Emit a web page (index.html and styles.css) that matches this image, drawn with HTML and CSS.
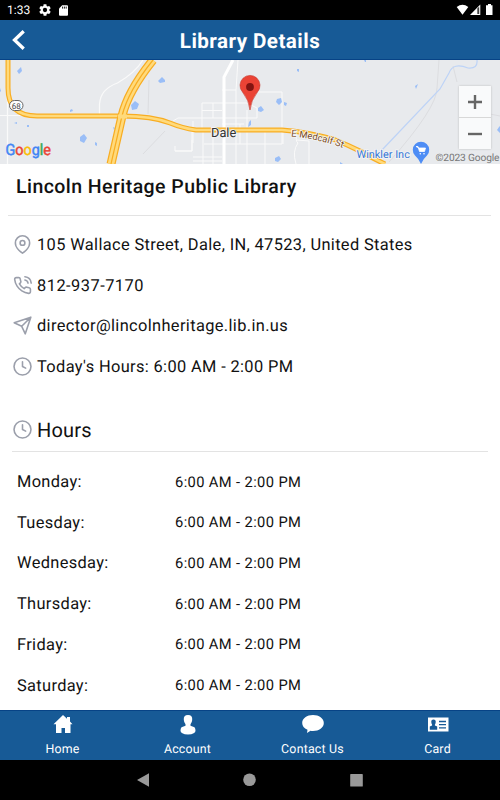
FILE: index.html
```html
<!DOCTYPE html>
<html lang="en">
<head>
    <meta charset="UTF-8">
    <meta name="viewport" content="width=device-width, initial-scale=1.0">
    <title>Library Details</title>
    <link rel="stylesheet" href="styles.css">
</head>
<body>
    <div class="status">
        <span class="time">1:33</span>
        <svg class="gear" width="12" height="12" viewBox="2 2 20 20"><path fill="#fff" d="M19.14 12.94c.04-.3.06-.61.06-.94s-.02-.64-.07-.94l2.03-1.58c.18-.14.23-.41.12-.61l-1.92-3.32c-.12-.22-.37-.29-.59-.22l-2.39.96c-.5-.38-1.03-.7-1.62-.94l-.36-2.54c-.04-.24-.24-.41-.48-.41h-3.84c-.24 0-.43.17-.47.41l-.36 2.54c-.59.24-1.13.57-1.62.94l-2.39-.96c-.22-.08-.47 0-.59.22L2.74 8.87c-.12.21-.08.47.12.61l2.03 1.58c-.05.3-.09.63-.09.94s.02.64.07.94l-2.03 1.58c-.18.14-.23.41-.12.61l1.92 3.32c.12.22.37.29.59.22l2.39-.96c.5.38 1.03.7 1.62.94l.36 2.54c.05.24.24.41.48.41h3.84c.24 0 .44-.17.47-.41l.36-2.54c.59-.24 1.13-.56 1.62-.94l2.39.96c.22.08.47 0 .59-.22l1.92-3.32c.12-.22.07-.47-.12-.61l-2.01-1.58zM12 15.6A3.6 3.6 0 1 1 12 8.4a3.6 3.6 0 0 1 0 7.2z"/></svg>
        <svg class="sd" width="9" height="11" viewBox="0 0 9 11"><path fill="#fff" d="M3.2.3H8q1 0 1 1v8.4q0 1-1 1H1q-1 0-1-1V3.5z"/><path stroke="#000" stroke-width=".9" d="M3.6 1.6v2M5.4 1.6v2M7.2 1.6v2"/></svg>
        <svg class="signals" width="38" height="12" viewBox="0 0 38 12"><path fill="#fff" d="M.7 3Q6.5-1.4 12.300 3L6.500 10.800zM24.300.5V11H14z"/><path fill="#444" d="M21.300 4.500l1.900-1.900V10h-1.900z"/><path fill="#fff" d="M32 0h3v1.300h1.500V11h-6.500V1.300H32z"/></svg>
    </div>
    <header>
        <svg class="back" width="14" height="20" viewBox="0 0 14 20"><path d="M11.700 1.200L2.500 10l9.200 8.800" fill="none" stroke="#fff" stroke-width="3.300"/></svg>
        <h1>Library Details</h1>
    </header>
    <div class="map">
        <svg width="500" height="104" viewBox="0 0 500 104">
            <!-- small streets -->
            <g class="street">
                <path d="M0 55.500H36M7.500 30V104M99.500 56V44q1-15 18-21Q135 13 143 0" stroke-width="1.200"/>
                <path d="M238 0l-2 30v74M222 30h14M222 43h25l10 5V58H178l-5 3M202 70V43h20M202 50.500h20M213 43v15M203 104V68M193 83V61M247 50v54M247 36v-4h35v52M204 84h78M192 80V91h-17v-5M192 70v21h-17M213 70v34M193 97h29M193 101h29M240 64v20M222 64h22M265 72v32M283 68V84M297 74q-2 7 1 9q-6 8-2 21M297 80l12 1v23"/>
            </g>
            <path d="M233 0l-9 17v87" fill="none" stroke="#fff" stroke-width="3"/>
            <g fill="none" stroke="#dcdde0" stroke-width="1">
                <path d="M149 20l-1 34M143 94l22-23M439 0l-2 28q0 20-48 74M457 22l-4-16M485 53l15 3"/>
            </g>
            <path d="M477 0q1 9-9 8-15-6-19 5l-9 16-58 61" fill="none" stroke="#bdd3f7" stroke-width="1.200"/>
            <!-- lakes -->
            <g fill="#9abef7">
                <path d="M17 11l4-4 1 4-3 3zM0 28l1 3-1 1zM158 21l4-4 3 3v2l-5 1zM131 45l4-4 4 3-2 5-5 1zM80 77l4-3 3 4-3 5-4-2zM95 82l2 1v3l-2-1zM70 50l2-1 1 2-3 1zM14 63l3-1v2zM27 65h2v2h-2z"/>
                <path d="M258 48l3-2 3 4-3 2-3-1zM249 62l2-2v5l-3 2zM277 39l4-1 1 4-3 3-3-3zM284 42l3 1-1 3-2-1zM297 9h2v3l-2-1zM275 98l4-2 2 3-3 3-3-1zM415 26l3-2-2 5zM499 67l1-1v7l-3-3zM364 0h2v2h-1zM340 102l3 2h-3zM113 67l2 1-1 2z"/>
            </g>
            <!-- highways -->
            <g fill="none">
                <path class="edge" d="M8 0V28Q8 56 37 56H122Q152 56 170 63Q182 68 196 70H282Q307 72 333 79Q348 85 362 92Q372 98 385 104"/>
                <path class="fill" d="M8 0V28Q8 56 37 56H122Q152 56 170 63Q182 68 196 70H282Q307 72 333 79Q348 85 362 92Q372 98 385 104"/>
                <path d="M153 0Q128 31 122 56L111 104" stroke="#f8ad22" stroke-width="9"/>
                <path d="M153 0Q128 31 122 56L111 104" stroke="#ffda7b" stroke-width="6.500"/>
                <path d="M153 0Q128 31 122 56L111 104" stroke="#f8ad22" stroke-width="1.200"/>
                <path d="M118 56.500h9" stroke="#ffda7b" stroke-width="4"/>
            </g>
            <rect x="9.500" y="40.500" width="13.500" height="10" rx="5" fill="#fff" stroke="#666" stroke-width="1"/>
            <text x="16.300" y="48.500" text-anchor="middle" font-size="8" fill="#444">68</text>
            <path d="M250 50Q249 40 242.500 32A10 10 0 1 1 257.500 32Q251 40 250 50z" fill="#ea4335" stroke="#c5362b" stroke-width=".6"/>
            <circle cx="250" cy="27" r="3.900" fill="#811411"/>
            <text class="halo" x="211" y="77" font-size="12.800" fill="#333">Dale</text>
            <path id="medcalf" d="M291 76.500Q323 79.500 348 90" fill="none"/>
            <text class="halo road" font-size="9.400"><textPath href="#medcalf">E Medcalf St</textPath></text>
            <text class="halo" x="356.500" y="98" font-size="10.900" fill="#3777d5">Winkler Inc</text>
            <path d="M421 104Q419 99 415 95.500A8.200 8.200 0 1 1 427 95.500Q423 99 421 104z" fill="#4e8df5"/>
            <path d="M416 86.500h2l1.500 5h5l1-3.500h-6.500z" fill="#fff" stroke="#fff" stroke-width=".8"/>
            <circle cx="420.300" cy="93.700" r=".8" fill="#fff"/><circle cx="424" cy="93.700" r=".8" fill="#fff"/>
            <text x="435.500" y="100.500" font-size="10.200" fill="#777" textLength="64">©2023 Google</text>
            <text class="google" x="5.500" y="94.500" font-size="15.500" textLength="45.500" lengthAdjust="spacingAndGlyphs"><tspan fill="#4285f4" stroke="#4285f4">G</tspan><tspan fill="#ea4335" stroke="#ea4335">o</tspan><tspan fill="#fbbc05" stroke="#fbbc05">o</tspan><tspan fill="#4285f4" stroke="#4285f4">g</tspan><tspan fill="#34a853" stroke="#34a853">l</tspan><tspan fill="#ea4335" stroke="#ea4335">e</tspan></text>
        </svg>
        <div class="zoom">
            <span><svg width="14" height="14" viewBox="0 0 14 14"><path d="M0 7h14M7 0v14" stroke="#666" stroke-width="2.400"/></svg></span>
            <span><svg width="14" height="14" viewBox="0 0 14 14"><path d="M0 7h14" stroke="#666" stroke-width="2.400"/></svg></span>
        </div>
    </div>
    <main>
        <h2>Lincoln Heritage Public Library</h2>
        <ul class="details">
            <li>
                <svg class="icon" viewBox="0 0 24 24"><path d="M21 10c0 7-9 13-9 13s-9-6-9-13a9 9 0 0 1 18 0z"/><circle cx="12" cy="10" r="3"/></svg>
                <span>105 Wallace Street, Dale, IN, 47523, United States</span>
            </li>
            <li>
                <svg class="icon" viewBox="0 0 24 24"><path d="M15.050 5A5 5 0 0 1 19 8.950M15.050 1A9 9 0 0 1 23 8.940m-1 7.980v3a2 2 0 0 1-2.180 2 19.790 19.790 0 0 1-8.630-3.070 19.500 19.500 0 0 1-6-6 19.790 19.790 0 0 1-3.070-8.670A2 2 0 0 1 4.110 2h3a2 2 0 0 1 2 1.720 12.840 12.840 0 0 0 .7 2.810 2 2 0 0 1-.45 2.110L8.090 9.910a16 16 0 0 0 6 6l1.270-1.270a2 2 0 0 1 2.110-.45 12.840 12.840 0 0 0 2.810.7A2 2 0 0 1 22 16.920z"/></svg>
                <span class="phone">812-937-7170</span>
            </li>
            <li>
                <svg class="icon" viewBox="0 0 24 24"><path d="M22.500 1.500L11 13M22.500 1.500L15.500 22.500 11 13 1.500 8.500z"/></svg>
                <span>director@lincolnheritage.lib.in.us</span>
            </li>
            <li>
                <svg class="icon" viewBox="0 0 24 24"><circle cx="12" cy="12" r="10.700"/><path d="M12 6v6l4 2"/></svg>
                <span>Today's Hours: 6:00 AM - 2:00 PM</span>
            </li>
        </ul>
        <h3>
            <svg class="icon" viewBox="0 0 24 24"><circle cx="12" cy="12" r="10.700"/><path d="M12 6v6l4 2"/></svg>
            <span>Hours</span>
        </h3>
        <div class="hours">
            <span>Monday:</span><span class="open">6:00 AM - 2:00 PM</span>
            <span>Tuesday:</span><span class="open">6:00 AM - 2:00 PM</span>
            <span>Wednesday:</span><span class="open">6:00 AM - 2:00 PM</span>
            <span>Thursday:</span><span class="open">6:00 AM - 2:00 PM</span>
            <span>Friday:</span><span class="open">6:00 AM - 2:00 PM</span>
            <span>Saturday:</span><span class="open">6:00 AM - 2:00 PM</span>
        </div>
    </main>
    <nav>
        <a><svg width="22" height="20" viewBox="0 0 22 20"><path fill="#fff" d="M11 0l4 3.700V2h3v4.500L20.500 9.300H18.500V18H13v-5H9.500v5H4V9.300H1.500z"/></svg>Home</a>
        <a><svg width="22" height="20" viewBox="0 0 22 20"><path fill="#fff" d="M11 0q4.700 0 4.200 5-.2 2.500-1.700 4.200v1.500l4 1.500q1 1 1 3.500Q18.500 19 11 19.500 3.500 19 3.500 15.700q0-2.500 1-3.500l4-1.500V9.200Q7 7.500 6.800 5 6.300 0 11 0z"/></svg>Account</a>
        <a><svg width="22" height="20" viewBox="0 0 22 20"><path fill="#fff" d="M11 0c6 0 10.800 3.400 10.800 8S17 16 11 16q-1.700 0-2.500-.2L5 18l.5-3.200Q.2 12.500.2 8C.2 3.400 5 0 11 0z"/></svg>Contact Us</a>
        <a><svg width="22" height="20" viewBox="0 0 22 20"><path fill="#fff" d="M1 2.500h20.500v14H1z"/><path fill="#175a96" d="M6.500 4.500q2.500 0 2.200 2.700Q8.500 9 7.900 9.500v1l2.300 1v3.200H2.800v-3.200l2.300-1v-1Q4.500 9 4.300 7.200 4 4.500 6.500 4.500z"/><path stroke="#175a96" stroke-width="1.300" d="M12 6.500h7M12 9.700h7M12 12.900h7"/></svg>Card</a>
    </nav>
    <div class="keys">
        <svg width="226" height="14" viewBox="0 0 226 14" fill="#999"><path d="M12 .3v13.400L0 7z"/><circle cx="112.500" cy="6.700" r="6.300"/><rect x="213.200" y="1" width="12.600" height="12.600" rx=".7"/></svg>
    </div>
</body>
</html>
```

FILE: styles.css
```css
* {
    margin: 0;
    padding: 0;
    box-sizing: border-box;
    font-family: Roboto, "Liberation Sans", sans-serif;
}

body {
    width: 500px;
    height: 800px;
    overflow: hidden;
    display: flex;
    flex-direction: column;
    background: #fff;
    color: #111;
    text-rendering: geometricPrecision;
}

svg {
    display: block;
    flex: none;
}

.status {
    height: 20px;
    flex: none;
    display: flex;
    align-items: center;
    padding: 0 6px 0 7px;
    background: #000;
    color: #fff;
}
.time {
    width: 32px;
    font-size: 12px;
}
.sd {
    margin-left: 8px;
}
.signals {
    margin-left: auto;
    margin-bottom: 1px;
}

header {
    height: 40px;
    flex: none;
    display: grid;
    grid-template-columns: 28px 1fr 28px;
    align-items: center;
    padding: 0 12px;
    background: #175a96;
    border-bottom: 1px solid #074386;
    color: #fff;
}
h1 {
    text-align: center;
    font-size: 20.6px;
    font-weight: 700;
    letter-spacing: 0.45px;
    line-height: 24px;
    padding-top: 4px;
}

.map {
    position: relative;
    height: 104px;
    flex: none;
    background: #e8eaed;
}
.street {
    fill: none;
    stroke: #fafafa;
    stroke-width: 1;
}
.edge {
    stroke: #f8ad22;
    stroke-width: 5;
}
.fill {
    stroke: #ffda7b;
    stroke-width: 2.6;
}
.halo {
    paint-order: stroke;
    stroke: #f4f5f6;
    stroke-width: 1.6px;
}
.road {
    fill: #7a4a22;
}
.google {
    font-family: Lato, sans-serif;
    font-weight: 400;
    stroke-width: 0.5px;
}
.zoom {
    position: absolute;
    right: 9px;
    top: 26px;
    width: 32px;
    background: #f9fafb;
    box-shadow: 0 0 2px #bbb;
}
.zoom span {
    height: 31px;
    display: flex;
    align-items: center;
    justify-content: center;
}
.zoom span + span {
    height: 32px;
    border-top: 1px solid #d8d8d8;
}

main {
    flex: 1;
    min-height: 0;
    overflow: hidden;
}
h2 {
    height: 52px;
    margin: 0 9px 0 8px;
    padding: 10px 8px 0;
    border-bottom: 1px solid #e3e3e3;
    font-size: 19.5px;
    font-weight: 500;
    line-height: 25px;
    letter-spacing: 0.44px;
    white-space: nowrap;
}
.details {
    list-style: none;
    padding: 8px 13px 0;
}
.details li {
    height: 40.7px;
    display: flex;
    align-items: center;
    gap: 5px;
    font-size: 16.4px;
    letter-spacing: 0.36px;
    white-space: nowrap;
}
.details span {
    padding-top: 2px;
}
.details .phone {
    letter-spacing: 0.48px;
}
.icon {
    width: 19px;
    height: 19px;
    fill: none;
    stroke: #9b9fab;
    stroke-width: 2;
    stroke-linecap: round;
    stroke-linejoin: round;
}
h3 {
    height: 43px;
    margin: 22px 12px 10px;
    padding-left: 1px;
    border-bottom: 1px solid #e3e3e3;
    display: flex;
    align-items: center;
    gap: 5px;
    font-size: 20px;
    font-weight: 400;
    letter-spacing: 0.2px;
}
.hours {
    display: grid;
    grid-template-columns: 158px 1fr;
    grid-auto-rows: 40.7px;
    align-items: center;
    padding-left: 17px;
    font-size: 16.4px;
    letter-spacing: 0.34px;
}
.hours span {
    padding-top: 1px;
}
.hours .open {
    padding-top: 0;
    padding-bottom: 1px;
    font-size: 14.7px;
    letter-spacing: 0.38px;
}

nav {
    height: 50px;
    flex: none;
    display: grid;
    grid-template-columns: repeat(4, 1fr);
    background: #175a96;
    border-top: 1px solid #074386;
}
nav a {
    display: flex;
    flex-direction: column;
    align-items: center;
    padding-top: 4px;
    gap: 7px;
    color: #fff;
    font-size: 12.4px;
    line-height: 16px;
    letter-spacing: 0.2px;
}

.keys {
    height: 40px;
    flex: none;
    display: flex;
    align-items: center;
    padding-left: 137px;
    background: #000;
}
```
